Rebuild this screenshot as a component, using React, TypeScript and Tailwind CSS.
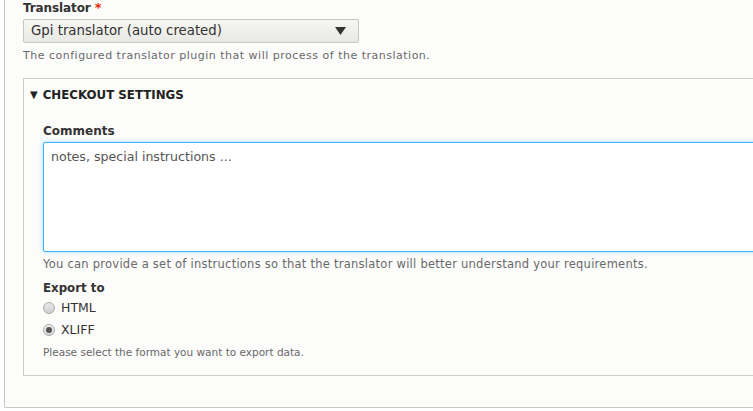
import React from "react";

const font = { fontFamily: '"DejaVu Sans", "Liberation Sans", sans-serif' };

export default function App() {
  return (
    <div className="w-[753px] h-[411px] overflow-hidden bg-white" style={font}>
      <div className="ml-[4px] w-[800px] h-[408px] border-l border-b border-[#c8c8c8] bg-[#fcfcfa] pl-[18px] rounded-bl-[2px]">
        <div className="text-[12px] font-bold text-[#333] leading-[16px] tracking-[-0.1px]">
          Translator <span className="text-[#e62600] text-[13px]">*</span>
        </div>
        <div className="mt-[3px] w-[336px] h-[24px] border border-[#c6c6c6] rounded-[2px] bg-gradient-to-b from-[#f6f6f3] to-[#e8e8e4] flex items-center pl-[7px] pr-[12px] text-[13.3px] text-[#333]">
          <span className="flex-1">Gpi translator (auto created)</span>
          <svg width="11" height="8" viewBox="0 0 11 8">
            <path d="M0 0 H11 L5.5 8 Z" fill="#333" />
          </svg>
        </div>
        <div className="mt-[5px] text-[11px] text-[#68696b] leading-[16px] tracking-[0.5px]">
          The configured translator plugin that will process of the translation.
        </div>
        <div className="mt-[14px] border border-[#ccc] border-r-0 w-[760px] h-[298px] pl-[6px]">
          <div className="mt-[8px] flex items-center gap-[5px] text-[11.8px] font-bold text-[#222] uppercase leading-[16px]">
            <span className="text-[10px]">▼</span>
            <span>Checkout settings</span>
          </div>
          <div className="pl-[13px] mt-[20px]">
            <div className="text-[12px] font-bold text-[#333] leading-[16px]">Comments</div>
            <div className="mt-[3px] h-[110px] border border-[#40b6ff] rounded-[2px] bg-white shadow-[0_0_4px_#9fd5ff] pl-[7px] pt-[5px] text-[12.6px] text-[#555]">
              notes, special instructions ...
            </div>
            <div className="mt-[4px] text-[11.5px] text-[#68696b] leading-[16px] tracking-[0.25px]">
              You can provide a set of instructions so that the translator will better understand your requirements.
            </div>
            <div className="mt-[8px] text-[11.8px] font-bold text-[#333] leading-[16px]">Export to</div>
            <div className="mt-[4px] flex items-center gap-[6px] text-[12.5px] text-[#333] leading-[16px]">
              <span className="w-[12px] h-[12px] rounded-full border border-[#aaa] bg-gradient-to-b from-[#e8e8e8] to-[#d0d0d0]" />
              <span>HTML</span>
            </div>
            <div className="mt-[6px] flex items-center gap-[6px] text-[12.5px] text-[#333] leading-[16px]">
              <span className="w-[12px] h-[12px] rounded-full border border-[#aaa] bg-gradient-to-b from-[#f0f0f0] to-[#d8d8d8] flex items-center justify-center">
                <span className="w-[6px] h-[6px] rounded-full bg-[#555]" />
              </span>
              <span>XLIFF</span>
            </div>
            <div className="mt-[6px] text-[10.5px] text-[#68696b] leading-[16px]">
              Please select the format you want to export data.
            </div>
          </div>
        </div>
      </div>
    </div>
  );
}
